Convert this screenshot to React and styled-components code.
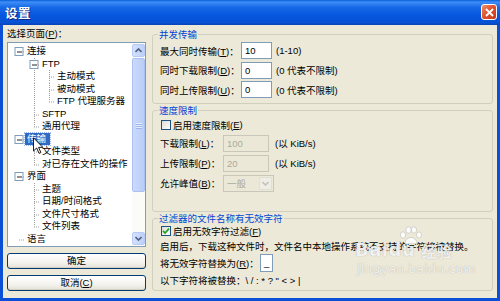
import React from "react";
import styled, { createGlobalStyle } from "styled-components";

const FONT = `Tahoma, "Liberation Sans", "Noto Sans CJK SC", sans-serif`;

const Global = createGlobalStyle`
  html, body { margin: 0; padding: 0; background: #fff; }
  body { font-family: ${FONT}; font-size: 9.5px; color: #000; }
  u { text-decoration: underline; text-underline-offset: 1px; }
`;

const Window = styled.div`
  position: relative;
  width: 500px;
  height: 301px;
  display: flex;
  flex-direction: column;
  background: #0a4fd6;
  overflow: hidden;
`;

const TitleBar = styled.div`
  height: 25px;
  flex: none;
  display: flex;
  align-items: center;
  justify-content: space-between;
  padding: 0 3px 1px 5px;
  box-sizing: border-box;
  background: linear-gradient(
    to bottom,
    #0a5fd8 0%,
    #3d8ef7 8%,
    #1767e6 30%,
    #0757df 60%,
    #0651d4 90%,
    #0744b5 100%
  );
  h1 {
    margin: 0;
    color: #fff;
    font-size: 12.5px;
    font-weight: bold;
    letter-spacing: 0.5px;
    text-shadow: 1px 1px 0 #0a2a80;
  }
`;

const CloseBtn = styled.div`
  width: 16px;
  height: 16px;
  box-sizing: border-box;
  border: 1px solid #fff;
  border-radius: 3px;
  background: linear-gradient(135deg, #f0906a 0%, #e0542e 45%, #c6381a 100%);
  display: flex;
  align-items: center;
  justify-content: center;
`;

const Client = styled.div`
  flex: 1;
  margin: 0 3px 3px;
  background: #ece9d8;
  display: flex;
  gap: 6px;
  padding: 3px 4px 7px 4px;
  box-sizing: border-box;
  min-height: 0;
`;

const LeftCol = styled.div`
  width: 139px;
  flex: none;
  display: flex;
  flex-direction: column;
`;

const PaneLabel = styled.div`
  height: 14px;
  line-height: 12px;
`;

const TreeBox = styled.div`
  position: relative;
  height: 205px;
  box-sizing: border-box;
  border: 1px solid #7f9db9;
  background: #fff;
  display: flex;
`;

const TreeList = styled.div`
  flex: 1;
  padding-top: 2px;
  overflow: hidden;
`;

const TreeRow = styled.div`
  height: 12.5px;
  display: flex;
  align-items: center;
  white-space: nowrap;
`;

const NodeText = styled.span`
  padding: ${(p) => (p.$sel ? "0 4px 0 2px" : "0 2px")};
  line-height: 12px;
  height: 12.5px;
  display: inline-flex;
  align-items: center;
  background: ${(p) => (p.$sel ? "#316ac5" : "transparent")};
  color: ${(p) => (p.$sel ? "#fff" : "#000")};
  outline: ${(p) => (p.$sel ? "1px dotted #9bb7e8" : "none")};
`;

const ScrollBar = styled.div`
  width: 13px;
  flex: none;
  display: flex;
  flex-direction: column;
  padding: 1px 0;
  background: #fbfbf8;
`;

const ScrollBtn = styled.div`
  height: 13px;
  box-sizing: border-box;
  border: 1px solid #b7cbf5;
  border-radius: 2px;
  background: linear-gradient(to right, #d6e2fd, #bccff8);
  display: flex;
  align-items: center;
  justify-content: center;
`;

const Thumb = styled.div`
  height: 134px;
  margin-top: 1px;
  box-sizing: border-box;
  border: 1px solid #aac1f2;
  border-radius: 2px;
  background: linear-gradient(to right, #cbdafc, #b8cdf8);
  display: flex;
  flex-direction: column;
  align-items: center;
  justify-content: center;
  gap: 1px;
  span {
    width: 6px;
    height: 1px;
    background: #e6eefe;
    box-shadow: 0 1px 0 #9cb5ee;
  }
`;

const Track = styled.div`
  flex: 1;
`;

const Cursor = styled.svg`
  position: absolute;
  left: 25px;
  top: 94px;
`;

const PushButton = styled.div`
  height: 16px;
  margin-top: 6px;
  box-sizing: border-box;
  border: 1px solid #003c74;
  border-radius: 3px;
  background: linear-gradient(to bottom, #ffffff 0%, #f4f3ee 60%, #e3e1d6 100%);
  box-shadow: inset 0 -1px 0 #d6d0c2;
  display: flex;
  align-items: center;
  justify-content: center;
  line-height: 12px;
`;

const RightCol = styled.div`
  flex: 1;
  display: flex;
  flex-direction: column;
  gap: 1px;
  padding-top: 1px;
  min-width: 0;
`;

const Group = styled.fieldset`
  margin: 0;
  padding: 0 6px 0 7px;
  min-width: 0;
  height: ${(p) => p.$h}px;
  box-sizing: border-box;
  border: 1px solid #d0d0bf;
  border-radius: 3px;
  legend {
    color: #0046d5;
    padding: 0 1px;
    margin-left: -2px;
    line-height: 11px;
    font-size: 9.5px;
  }
`;

const Stack = styled.div`
  display: flex;
  flex-direction: column;
  gap: ${(p) => p.$gap}px;
  padding-top: ${(p) => p.$top}px;
`;

const FieldRow = styled.div`
  height: ${(p) => p.$h || 17}px;
  display: flex;
  align-items: center;
  white-space: nowrap;
`;

const FieldLabel = styled.span`
  width: ${(p) => p.$w}px;
  flex: none;
`;

const TextBox = styled.div`
  width: ${(p) => p.$w}px;
  height: ${(p) => p.$h || 17}px;
  flex: none;
  box-sizing: border-box;
  border: 1px solid ${(p) => (p.$disabled ? "#c9c7ba" : "#7f9db9")};
  background: ${(p) => (p.$disabled ? "#ebe8d7" : "#fff")};
  color: ${(p) => (p.$disabled ? "#aca899" : "#000")};
  padding: 0 3px;
  display: flex;
  align-items: center;
  margin-right: ${(p) => p.$gap || 4}px;
`;

const Select = styled.div`
  width: 51px;
  height: 17px;
  box-sizing: border-box;
  border: 1px solid #c9c7ba;
  background: #ebe8d7;
  color: #aca899;
  display: flex;
  align-items: center;
  padding-left: 3px;
  span {
    flex: 1;
  }
  i {
    width: 13px;
    height: 13px;
    margin-right: 1px;
    box-sizing: border-box;
    border: 1px solid #e1dfd2;
    border-radius: 2px;
    background: #efeee6;
    display: flex;
    align-items: center;
    justify-content: center;
  }
`;

const Check = styled.span`
  width: 10px;
  height: 10px;
  flex: none;
  box-sizing: border-box;
  border: 1px solid #1c5180;
  background: linear-gradient(135deg, #dcdcd6, #ffffff);
  margin: 0 2px 0 1px;
  display: inline-flex;
  align-items: center;
  justify-content: center;
`;

const Watermark = styled.div`
  position: absolute;
  left: 355px;
  top: 226px;
  color: rgba(255, 255, 255, 0.85);
  text-shadow: 0 0 1px rgba(110, 110, 110, 0.6);
  font-family: "DejaVu Sans", ${FONT};
  pointer-events: none;
  .logo {
    position: relative;
    display: flex;
    align-items: flex-end;
    height: 33px;
    font-size: 18px;
    font-weight: bold;
    line-height: 18px;
    letter-spacing: 0.5px;
  }
  .paw {
    position: absolute;
    left: 44px;
    top: 0;
  }
  .cn {
    font-size: 15px;
    font-family: "Noto Sans CJK SC", sans-serif;
    margin-left: 6px;
    line-height: 17px;
  }
  .url {
    font-size: 12.5px;
    line-height: 14px;
    margin-top: 3px;
    margin-left: 2px;
    letter-spacing: 0.2px;
  }
`;

const LINE = "#a0a0a0";

function Connector({ level, box, last, guides = [] }) {
  const w = 17 + level * 15;
  const x = 11 + level * 15;
  const h = 12.5;
  const mid = 6.5;
  return (
    <svg width={w} height={h} style={{ flex: "none", display: "block" }}>
      {guides.map((g) => (
        <line key={g} x1={11 + g * 15 + 0.5} y1={0} x2={11 + g * 15 + 0.5} y2={h} stroke={LINE} strokeDasharray="1 1" />
      ))}
      {level > 0 && (
        <line x1={x + 0.5} y1={0} x2={x + 0.5} y2={last ? mid : h} stroke={LINE} strokeDasharray="1 1" />
      )}
      <line x1={x} y1={mid + 0.5} x2={w} y2={mid + 0.5} stroke={LINE} strokeDasharray="1 1" />
      {box && (
        <g>
          <rect x={x - 4} y={mid - 4} width={8} height={8} fill="#fff" stroke="#7f9db9" />
          <line x1={x - 2} y1={mid + 0.5} x2={x + 3} y2={mid + 0.5} stroke="#222" />
        </g>
      )}
    </svg>
  );
}

const nodes = [
  { t: "连接", l: 0, box: true },
  { t: "FTP", l: 1, box: true },
  { t: "主动模式", l: 2, g: [1] },
  { t: "被动模式", l: 2, g: [1] },
  { t: "FTP 代理服务器", l: 2, g: [1], last: true },
  { t: "SFTP", l: 1 },
  { t: "通用代理", l: 1, last: true },
  { t: "传输", l: 0, box: true, sel: true },
  { t: "文件类型", l: 1 },
  { t: "对已存在文件的操作", l: 1, last: true },
  { t: "界面", l: 0, box: true },
  { t: "主题", l: 1 },
  { t: "日期/时间格式", l: 1 },
  { t: "文件尺寸格式", l: 1 },
  { t: "文件列表", l: 1, last: true },
  { t: "语言", l: 0 },
];

const Arrow = ({ up }) => (
  <svg width="7" height="5" viewBox="0 0 7 5">
    <path
      d={up ? "M0.5 4 L3.5 1 L6.5 4" : "M0.5 1 L3.5 4 L6.5 1"}
      fill="none"
      stroke="#4d6185"
      strokeWidth="1.6"
    />
  </svg>
);

export default function App() {
  return (
    <Window>
      <Global />
      <TitleBar>
        <h1>设置</h1>
        <CloseBtn>
          <svg width="9" height="9" viewBox="0 0 9 9">
            <path d="M1 1 L8 8 M8 1 L1 8" stroke="#fff" strokeWidth="1.8" />
          </svg>
        </CloseBtn>
      </TitleBar>
      <Client>
        <LeftCol>
          <PaneLabel>
            选择页面(<u>P</u>)：
          </PaneLabel>
          <TreeBox>
            <TreeList>
              {nodes.map((n) => (
                <TreeRow key={n.t}>
                  <Connector level={n.l} box={n.box} last={n.last} guides={n.g} />
                  <NodeText $sel={n.sel}>{n.t}</NodeText>
                </TreeRow>
              ))}
            </TreeList>
            <ScrollBar>
              <ScrollBtn>
                <Arrow up />
              </ScrollBtn>
              <Thumb>
                <span />
                <span />
                <span />
              </Thumb>
              <Track />
              <ScrollBtn>
                <Arrow />
              </ScrollBtn>
            </ScrollBar>
            <Cursor width="11" height="18" viewBox="0 0 12 19">
              <path
                d="M0.5 0.5 L0.5 15 L4 11.7 L6.6 17.5 L8.6 16.6 L6.1 11 L10.8 11 Z"
                fill="#fff"
                stroke="#000"
                strokeWidth="1"
              />
            </Cursor>
          </TreeBox>
          <PushButton>确定</PushButton>
          <PushButton>
            取消(<u>C</u>)
          </PushButton>
        </LeftCol>

        <RightCol>
          <Group $h={75}>
            <legend>并发传输</legend>
            <Stack $gap={2.5} $top={2}>
              <FieldRow>
                <FieldLabel $w={81}>
                  最大同时传输(<u>T</u>)：
                </FieldLabel>
                <TextBox $w={31}>10</TextBox>
                <span>(1-10)</span>
              </FieldRow>
              <FieldRow>
                <FieldLabel $w={81}>
                  同时下载限制(<u>D</u>)：
                </FieldLabel>
                <TextBox $w={31}>0</TextBox>
                <span>(0 代表不限制)</span>
              </FieldRow>
              <FieldRow>
                <FieldLabel $w={81}>
                  同时上传限制(<u>U</u>)：
                </FieldLabel>
                <TextBox $w={31}>0</TextBox>
                <span>(0 代表不限制)</span>
              </FieldRow>
            </Stack>
          </Group>

          <Group $h={108}>
            <legend>速度限制</legend>
            <Stack $gap={3} $top={2}>
              <FieldRow $h={14}>
                <Check />
                启用速度限制(<u>E</u>)
              </FieldRow>
              <FieldRow>
                <FieldLabel $w={63}>
                  下载限制(<u>L</u>)：
                </FieldLabel>
                <TextBox $w={46} $disabled $gap={6}>
                  100
                </TextBox>
                <span>(以 KiB/s)</span>
              </FieldRow>
              <FieldRow>
                <FieldLabel $w={63}>
                  上传限制(<u>P</u>)：
                </FieldLabel>
                <TextBox $w={46} $disabled $gap={6}>
                  20
                </TextBox>
                <span>(以 KiB/s)</span>
              </FieldRow>
              <FieldRow>
                <FieldLabel $w={63}>
                  允许峰值(<u>B</u>)：
                </FieldLabel>
                <Select>
                  <span>一般</span>
                  <i>
                    <svg width="7" height="5" viewBox="0 0 7 5">
                      <path d="M0.5 1 L3.5 4 L6.5 1" fill="none" stroke="#c4c2b5" strokeWidth="1.6" />
                    </svg>
                  </i>
                </Select>
              </FieldRow>
            </Stack>
          </Group>

          <Group $h={78}>
            <legend>过滤器的文件名称有无效字符</legend>
            <Stack $gap={1.5} $top={0}>
              <FieldRow $h={14}>
                <Check>
                  <svg width="8" height="8" viewBox="0 0 8 8">
                    <path d="M1 3.8 L3.1 6 L7 1.6" fill="none" stroke="#21a121" strokeWidth="1.7" />
                  </svg>
                </Check>
                启用无效字符过滤(<u>F</u>)
              </FieldRow>
              <FieldRow $h={13}>
                启用后，下载这种文件时，文件名中本地操作系统不支持的字符将被替换。
              </FieldRow>
              <FieldRow $h={17}>
                <FieldLabel $w={100}>
                  将无效字符替换为(<u>R</u>)：
                </FieldLabel>
                <TextBox $w={13} $h={18}>
                  _
                </TextBox>
              </FieldRow>
              <FieldRow $h={14}>{'以下字符将被替换：\\ / : * ? " < > |'}</FieldRow>
            </Stack>
          </Group>
        </RightCol>
      </Client>

      <Watermark>
        <div className="logo">
          <svg className="paw" width="24" height="18" viewBox="0 0 24 18">
            <g fill="rgba(255,255,255,0.9)" stroke="rgba(130,130,130,0.5)" strokeWidth="0.6">
              <ellipse cx="4" cy="9" rx="2.6" ry="3.2" />
              <ellipse cx="9.5" cy="4" rx="2.6" ry="3.2" />
              <ellipse cx="15" cy="4" rx="2.6" ry="3.2" />
              <ellipse cx="20" cy="9" rx="2.5" ry="3" />
              <path d="M6 18 C6 14 9 11.5 12 11.5 C15 11.5 18 14 18 18 Z" />
            </g>
          </svg>
          <span>Baidu</span>
          <span className="cn">经验</span>
        </div>
        <div className="url">jingyan.baidu.com</div>
      </Watermark>
    </Window>
  );
}
